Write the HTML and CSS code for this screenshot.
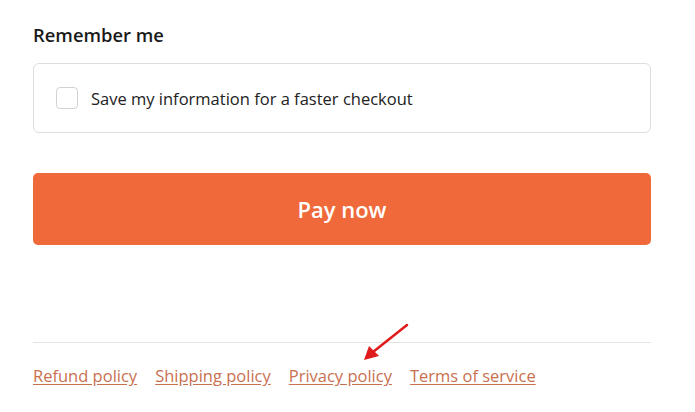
FILE: index.html
```html
<!DOCTYPE html>
<html lang="en">
<head>
  <meta charset="UTF-8" />
  <title>Checkout</title>
  <link rel="stylesheet" href="styles.css">
</head>
<body>
  <div class="checkout">
    <!-- Remember me -->
    <h2 class="section-title">Remember me</h2>
    <label class="remember-box">
      <span class="check"></span>
      <span class="remember-text">Save my information for a faster checkout</span>
    </label>

    <button class="pay-btn" type="button">Pay now</button>

    <!-- Footer links -->
    <div class="policy-links">
      <a href="#">Refund policy</a>
      <a href="#">Shipping policy</a>
      <a href="#">Privacy policy</a>
      <a href="#">Terms of service</a>

      <svg class="arrow" width="60" height="50" viewBox="0 0 60 50">
        <line x1="52" y1="4" x2="18" y2="31" stroke="#e01b1b" stroke-width="2.5" stroke-linecap="round" />
        <polygon points="9,39 14,25 24,35" fill="#e01b1b" />
      </svg>
    </div>
  </div>
</body>
</html>
```

FILE: styles.css
```css
body {
  margin: 0;
  background: #fff;
  font-family: 'Open Sans', 'Noto Sans', sans-serif;
  color: #1a1a1a;
}

.checkout {
  width: 618px;
  padding: 20px 0 0 33px;
}

.section-title {
  margin: 0 0 14px;
  font-size: 18.4px;
  font-weight: 600;
  line-height: 29px;
}

.remember-box {
  display: flex;
  align-items: center;
  gap: 13px;
  height: 68px;
  padding: 0 22px;
  border: 1px solid #dedede;
  border-radius: 6px;
  cursor: pointer;
}

.check {
  width: 20px;
  height: 20px;
  border: 1px solid #d2d2d2;
  border-radius: 4px;
  background: #fff;
}

.remember-text {
  font-size: 16.5px;
  color: #222;
}

.pay-btn {
  display: block;
  width: 100%;
  height: 72px;
  margin-top: 40px;
  border: none;
  border-radius: 5px;
  background: #f0693a;
  color: #fff;
  font-family: inherit;
  font-size: 22px;
  font-weight: 600;
  cursor: pointer;
}

.policy-links {
  position: relative;
  display: flex;
  gap: 18px;
  margin-top: 97px;
  padding-top: 21px;
  border-top: 1px solid #e3e3e3;
}

.policy-links a {
  color: #c9704f;
  font-size: 16.5px;
  text-decoration: underline;
  text-underline-offset: 2px;
}

.arrow {
  position: absolute;
  left: 322px;
  top: -22px;
}
```
